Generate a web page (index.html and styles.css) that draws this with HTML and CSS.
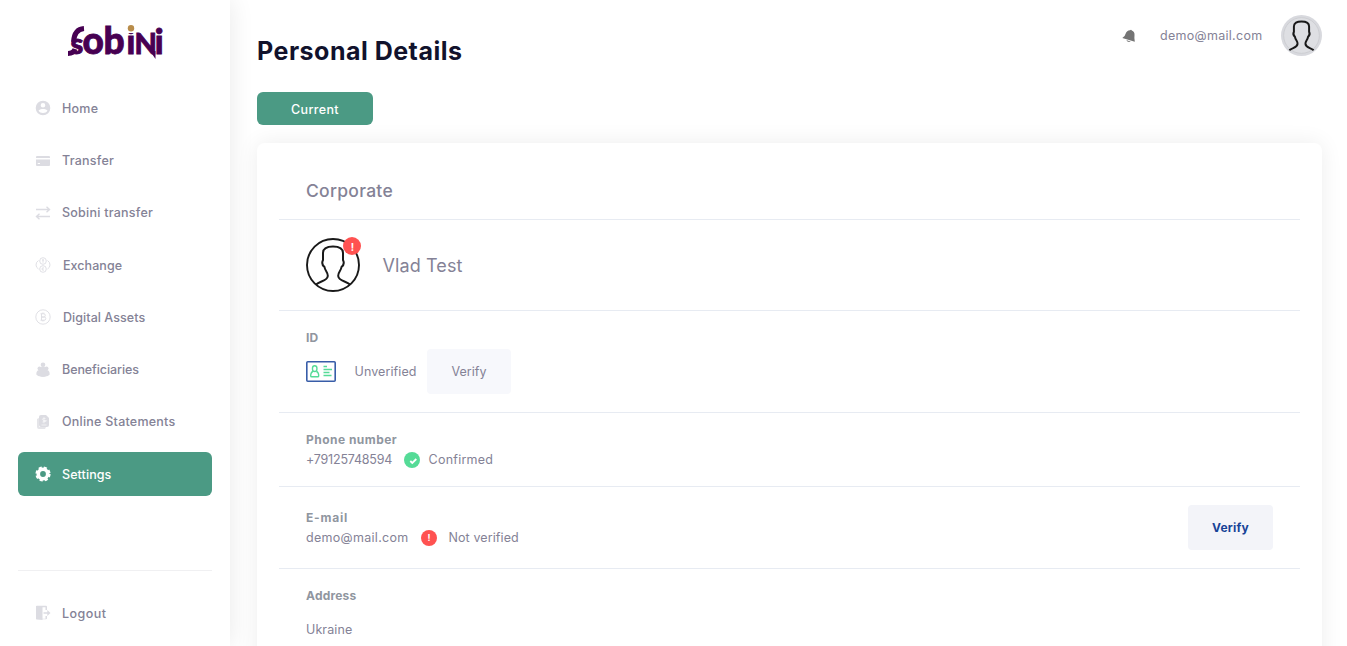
FILE: index.html
```html
<!DOCTYPE html>
<html lang="en">
<head>
<meta charset="utf-8">
<title>Personal Details</title>
<link rel="stylesheet" href="styles.css">
</head>
<body>
<div class="app">
  <aside class="sidebar">
    <svg class="logo" width="98" height="40" viewBox="0 0 98 40">
      <text class="logo-text" y="31.500" x="3.500 15.500 36.500 59.500 67.500 87.800"><tspan class="logo-s">s</tspan><tspan class="logo-wide">ob</tspan>i<tspan class="logo-n">N</tspan>i</text>
      <path class="logo-tail" d="M1 31.500C5 31.500 7 30 8 27M6.500 20C7 12 10 7 17 6.500"/>
      <path class="logo-fill" d="M83 29h5.500v8z"/>
      <rect class="logo-cover" x="59.500" y="1" width="9" height="10"/>
      <circle class="logo-dot" cx="64" cy="6.300" r="3.200"/>
    </svg>
    <nav class="nav">
      <a class="nav-item"><svg class="icon" viewBox="0 0 16 16"><path fill-rule="evenodd" d="M8 .7a7.300 7.300 0 1 0 0 14.600A7.300 7.300 0 0 0 8 .7zM8 3a2.300 2.300 0 1 1 0 4.600A2.300 2.300 0 0 1 8 3zM3.500 10.500C5 9.200 6.500 9 8 9s3 .2 4.500 1.500C11.500 12.300 10 13 8 13s-3.500-.7-4.500-2.500z"/></svg><span>Home</span></a>
      <a class="nav-item"><svg class="icon" viewBox="0 0 16 16"><path fill-rule="evenodd" d="M1 5V4q0-1 1-1h12q1 0 1 1v1zM1 6.500h14V12q0 1-1 1H2q-1 0-1-1zM2.700 10v1H5v-1z"/></svg><span>Transfer</span></a>
      <a class="nav-item"><svg class="icon line thick" viewBox="0 0 16 16"><path d="M1 4.500h13.500M11.500 1.800l3 2.700-3 2.700M15 11.500H1.500M4.500 8.800l-3 2.700 3 2.700"/></svg><span>Sobini transfer</span></a>
      <a class="nav-item nudged"><svg class="icon line" viewBox="0 0 16 16"><circle cx="8" cy="4" r="3.300"/><circle cx="8" cy="12" r="3.300"/><path d="M8 2.300v3.400M7 3h2M9 11q-2-.8-2 1t2 1M3.500 3.500Q1 5 1 8q0 2.500 2.500 4M12.500 3.500Q15 5 15 8q0 2.500-2.500 4"/></svg><span>Exchange</span></a>
      <a class="nav-item nudged"><svg class="icon line" viewBox="0 0 16 16"><circle cx="8" cy="8" r="7.200"/><path d="M5.500 4.800h3.200q1.600 0 1.600 1.600T8.700 8H6.500h2.700q1.600 0 1.600 1.600t-1.600 1.600H5.500M6.500 4.800v6.400M7.300 3.600v1.200M8.800 3.600v1.200M7.300 11.200v1.200M8.800 11.200v1.200"/></svg><span>Digital Assets</span></a>
      <a class="nav-item tight"><svg class="icon" viewBox="0 0 16 16"><circle cx="8" cy="2.800" r="2.300"/><circle cx="4.500" cy="6.500" r="2"/><circle cx="11.500" cy="6.500" r="2"/><path d="M5 8.500q0-4 3-4t3 4V14q-3 1.800-6 0z"/><path d="M1.300 12.500Q1.300 8 4.300 8H7v6.500q-4 .5-5.700-2zM14.700 12.500q0-4.500-3-4.500H9v6.500q4 .5 5.700-2z"/></svg><span>Beneficiaries</span></a>
      <a class="nav-item"><svg class="icon" viewBox="0 0 16 16"><path opacity=".75" d="M2 5l2-1v9h7l-1 2H4q-2 0-2-2z"/><path d="M6 1h5l3 3v7q0 2-2 2H6q-2 0-2-2V3q0-2 2-2z"/><path class="etch" d="M10.500 4.500q-3-.8-3 .7t3 1.500-3 1.300M9 3.300v6M6.500 11h5"/></svg><span>Online Statements</span></a>
      <a class="nav-item active"><svg class="icon" viewBox="0 0 16 16"><circle class="gear-teeth" cx="8" cy="8" r="6.400"/><circle class="gear-ring" cx="8" cy="8" r="4.700"/></svg><span>Settings</span></a>
    </nav>
    <hr class="divider">
    <a class="nav-item logout"><svg class="icon" viewBox="0 0 16 16"><path d="M1 1h6.500v14L1 14.300z"/><path d="M1.500 .7H11q1 0 1 1V5h-1.500V2.200H7v11.600h3.500V11H12v2.300q0 1-1 1H1.500z"/><path d="M8.500 7.300h3.800V5L15.500 8l-3.200 3V8.800H8.500z"/></svg><span>Logout</span></a>
  </aside>

  <main class="main">
    <header class="header">
      <h1 class="title">Personal Details</h1>
      <div class="account">
        <svg class="bell" width="14" height="14" viewBox="0 0 14 14"><path d="M.3 9Q3 7.500 3.600 4.700 4.800 1.300 8 1.200q1.200-1.200 1.800.2 3 1.200 2.700 4.500-.4 3.300.3 6.800zM4.300 11l4.500 1.700q-3.300 1.200-4.500-1.700z"/></svg>
        <span class="account-mail">demo@mail.com</span>
        <svg class="avatar" width="41" height="41" viewBox="0 0 54 54"><circle class="avatar-bg" cx="27" cy="27" r="27"/><circle class="avatar-ring" cx="27" cy="27" r="23.500"/><path class="person" d="M11 46.500C15 43 21.500 43 21.800 38 22 34 19 33 18.500 29 16 27 16 24 17 22V15C17 10 21 8.500 27 8.500S37 10 37 15v7c1 2 1 5-1.500 7-.5 4-3.500 5-3.300 9 .3 5 6.800 5 10.800 8.500"/></svg>
      </div>
    </header>
    <button class="tab">Current</button>

    <section class="card">
      <div class="row row-type"><h2 class="type">Corporate</h2></div>
      <div class="row row-person">
        <div class="portrait">
          <svg width="54" height="54" viewBox="0 0 54 54"><circle class="portrait-ring" cx="27" cy="27" r="26"/><path class="person portrait-person" d="M10 46.500C14 43 21.500 43 21.800 38 22 34 19 33 18.500 29 16 27 16 24 17 22V15C17 10 21 8.500 27 8.500S37 10 37 15v7c1 2 1 5-1.500 7-.5 4-3.500 5-3.300 9 .3 5 7.800 5 11.800 8.500"/></svg>
          <span class="alert alert-large">!</span>
        </div>
        <span class="name">Vlad Test</span>
      </div>
      <div class="row row-id">
        <h3 class="label">ID</h3>
        <div class="id-line">
          <svg class="id-card" width="30" height="21" viewBox="0 0 30 21"><rect class="id-frame" x=".8" y=".8" width="28.400" height="19.400" rx="1"/><g class="id-detail"><rect x="6.500" y="4.800" width="4.400" height="5.700" rx="2.200"/><path d="M7 10.500q-2.300.6-2.300 4.500 0 .8 1 .8h6q1 0 1-.8 0-3.900-2.300-4.500M17.500 5.500h3.500M17.500 8.500h8.500M17.500 11.500h6M17.500 14.500h8"/></g></svg>
          <span class="value status-id">Unverified</span>
          <button class="verify">Verify</button>
        </div>
      </div>
      <div class="row row-phone">
        <h3 class="label label-phone">Phone number</h3>
        <div class="line"><span class="value phone">+79125748594</span><svg class="check" width="16" height="16" viewBox="0 0 16 16"><circle cx="8" cy="8" r="8"/><path d="M6.300 9l2 2 4-4"/></svg><span class="value confirmed">Confirmed</span></div>
      </div>
      <div class="row row-mail">
        <div>
          <h3 class="label label-mail">E-mail</h3>
          <div class="line line-mail"><span class="value mail">demo@mail.com</span><span class="alert">!</span><span class="value unverified">Not verified</span></div>
        </div>
        <button class="verify verify-main">Verify</button>
      </div>
      <div class="row row-address">
        <h3 class="label label-address">Address</h3>
        <p class="value country">Ukraine</p>
      </div>
    </section>
  </main>
</div>
</body>
</html>
```
FILE: styles.css
```css
* { box-sizing: border-box; }
body { margin: 0; font-family: Inter, "Liberation Sans", sans-serif; font-size: 12.500px; color: #848296; background: #fff; overflow: hidden; }
h1, h2, h3, p { margin: 0; }
button { border: 0; font: inherit; padding: 0; }
.app { display: flex; height: 646px; overflow: hidden; }

.sidebar { width: 230px; flex: none; padding: 22px 18px 0; box-shadow: 0 0 24px rgba(0, 0, 0, .09); display: flex; flex-direction: column; }
.logo { display: block; margin-left: 49px; flex: none; overflow: visible; }
.logo-text { font: 900 34px Lato, sans-serif; fill: #470052; stroke: #470052; stroke-width: .8; }
.logo-s { font-size: 29px; }
.logo-wide { font-size: 37px; }
.logo-n { font-size: 29px; }
.logo-tail { fill: none; stroke: #470052; stroke-width: 5; }
.logo-fill { fill: #470052; }
.logo-cover { fill: #fff; }
.logo-dot { fill: #b88c4a; }
.nav { display: flex; flex-direction: column; gap: 8.250px; margin-top: 24.300px; }
.nav-item { display: flex; align-items: center; height: 44px; flex: none; padding-left: 17px; gap: 11px; border-radius: 6px; font-weight: 500; letter-spacing: .24px; }
.nav-item.nudged { gap: 12px; letter-spacing: .05px; }
.nav-item.tight { letter-spacing: -.08px; }
.nav-item.active { background: #4b9a84; color: #fff; letter-spacing: .08px; }
.nav-item.logout { letter-spacing: .45px; }
.icon { width: 16px; height: 16px; fill: #dcdce2; flex: none; }
.icon.line { fill: none; stroke: #dcdce2; stroke-width: .9; }
.icon.thick { stroke-width: 1.400; }
.etch { fill: none; stroke: #fff; stroke-width: .6; }
.gear-teeth { fill: none; stroke: #fff; stroke-width: 2.400; stroke-dasharray: 3.030 2; }
.gear-ring { fill: none; stroke: #fff; stroke-width: 3.600; }
.divider { width: 100%; height: 1px; border: 0; background: #f0f0f2; margin: 74px 0 20px; flex: none; }

.main { flex: 1; padding: 0 25px 0 27px; }
.header { height: 92px; display: flex; justify-content: space-between; }
.title { font-size: 25px; line-height: 30px; font-weight: 700; color: #11122c; margin-top: 36px; letter-spacing: .5px; }
.account { display: flex; align-items: center; height: 41px; margin-top: 15px; }
.bell { fill: #747474; margin-right: 23.500px; }
.account-mail { margin-right: 18.500px; letter-spacing: .3px; }
.avatar-bg { fill: #d8d9de; }
.avatar-ring { fill: #dedfe3; stroke: #c9cace; }
.person { fill: none; stroke: #191919; stroke-width: 2.600; }
.portrait-person { stroke-width: 2; }
.tab { display: block; width: 116px; height: 33px; border-radius: 6px; background: #4b9a84; color: #fff; font-weight: 500; letter-spacing: .35px; padding-top: 1px; }

.card { margin-top: 18px; padding: 0 22px; height: 600px; border-radius: 8px; box-shadow: 0 0 22px rgba(0, 0, 0, .075); }
.row { padding: 0 27px; border-bottom: 1px solid #e7ebf2; }
.row-type { height: 77px; padding-top: 36px; }
.type { font-size: 17.500px; line-height: 24px; font-weight: 500; letter-spacing: .28px; }
.row-person { height: 91px; display: flex; align-items: center; }
.portrait { position: relative; width: 54px; height: 54px; }
.portrait-ring { fill: none; stroke: #191919; stroke-width: 1.900; }
.name { font-size: 18px; margin-left: 22.500px; letter-spacing: .1px; }
.alert { display: flex; align-items: center; justify-content: center; width: 16px; height: 16px; border-radius: 50%; background: #ff5251; color: #fff; font-size: 9px; font-weight: 700; }
.alert-large { position: absolute; left: 37px; top: -1px; width: 18px; height: 18px; font-size: 10px; padding: 2px 0 0 1px; }
.row-id { height: 102px; padding-top: 17px; }
.label { font-size: 12px; line-height: 20px; font-weight: 700; color: #90969f; letter-spacing: .2px; }
.label-phone { letter-spacing: .47px; }
.label-mail { letter-spacing: .8px; }
.value { font-size: 12.500px; line-height: 20px; }
.id-line { display: flex; align-items: center; margin-top: 1px; }
.id-frame { fill: none; stroke: #385da8; stroke-width: 1.600; }
.id-detail { fill: none; stroke: #55db97; stroke-width: 1.400; }
.status-id { margin-left: 18.500px; width: 72.500px; letter-spacing: .1px; }
.verify { width: 84px; height: 45px; border-radius: 4px; background: #f7f8fc; color: #848296; font-size: 12.500px; }
.verify-main { width: 85px; background: #f3f4f9; color: #174397; font-size: 12px; font-weight: 700; letter-spacing: .2px; margin-bottom: 2px; }
.row-phone { height: 74px; padding-top: 17px; }
.line { display: flex; align-items: center; }
.line svg, .line .alert { margin-top: -1px; }
.phone { width: 98px; letter-spacing: -.2px; }
.check { fill: #55db97; margin-right: 8.500px; }
.check path { fill: none; stroke: #fff; stroke-width: 1.800; }
.confirmed { letter-spacing: .25px; }
.row-mail { height: 82px; display: flex; align-items: center; justify-content: space-between; padding-top: 1px; }
.mail { width: 115px; letter-spacing: .3px; }
.unverified { margin-left: 11.500px; letter-spacing: .1px; }
.row-address { border: 0; padding-top: 17px; }
.country { margin-top: 14px; letter-spacing: .1px; }
```
